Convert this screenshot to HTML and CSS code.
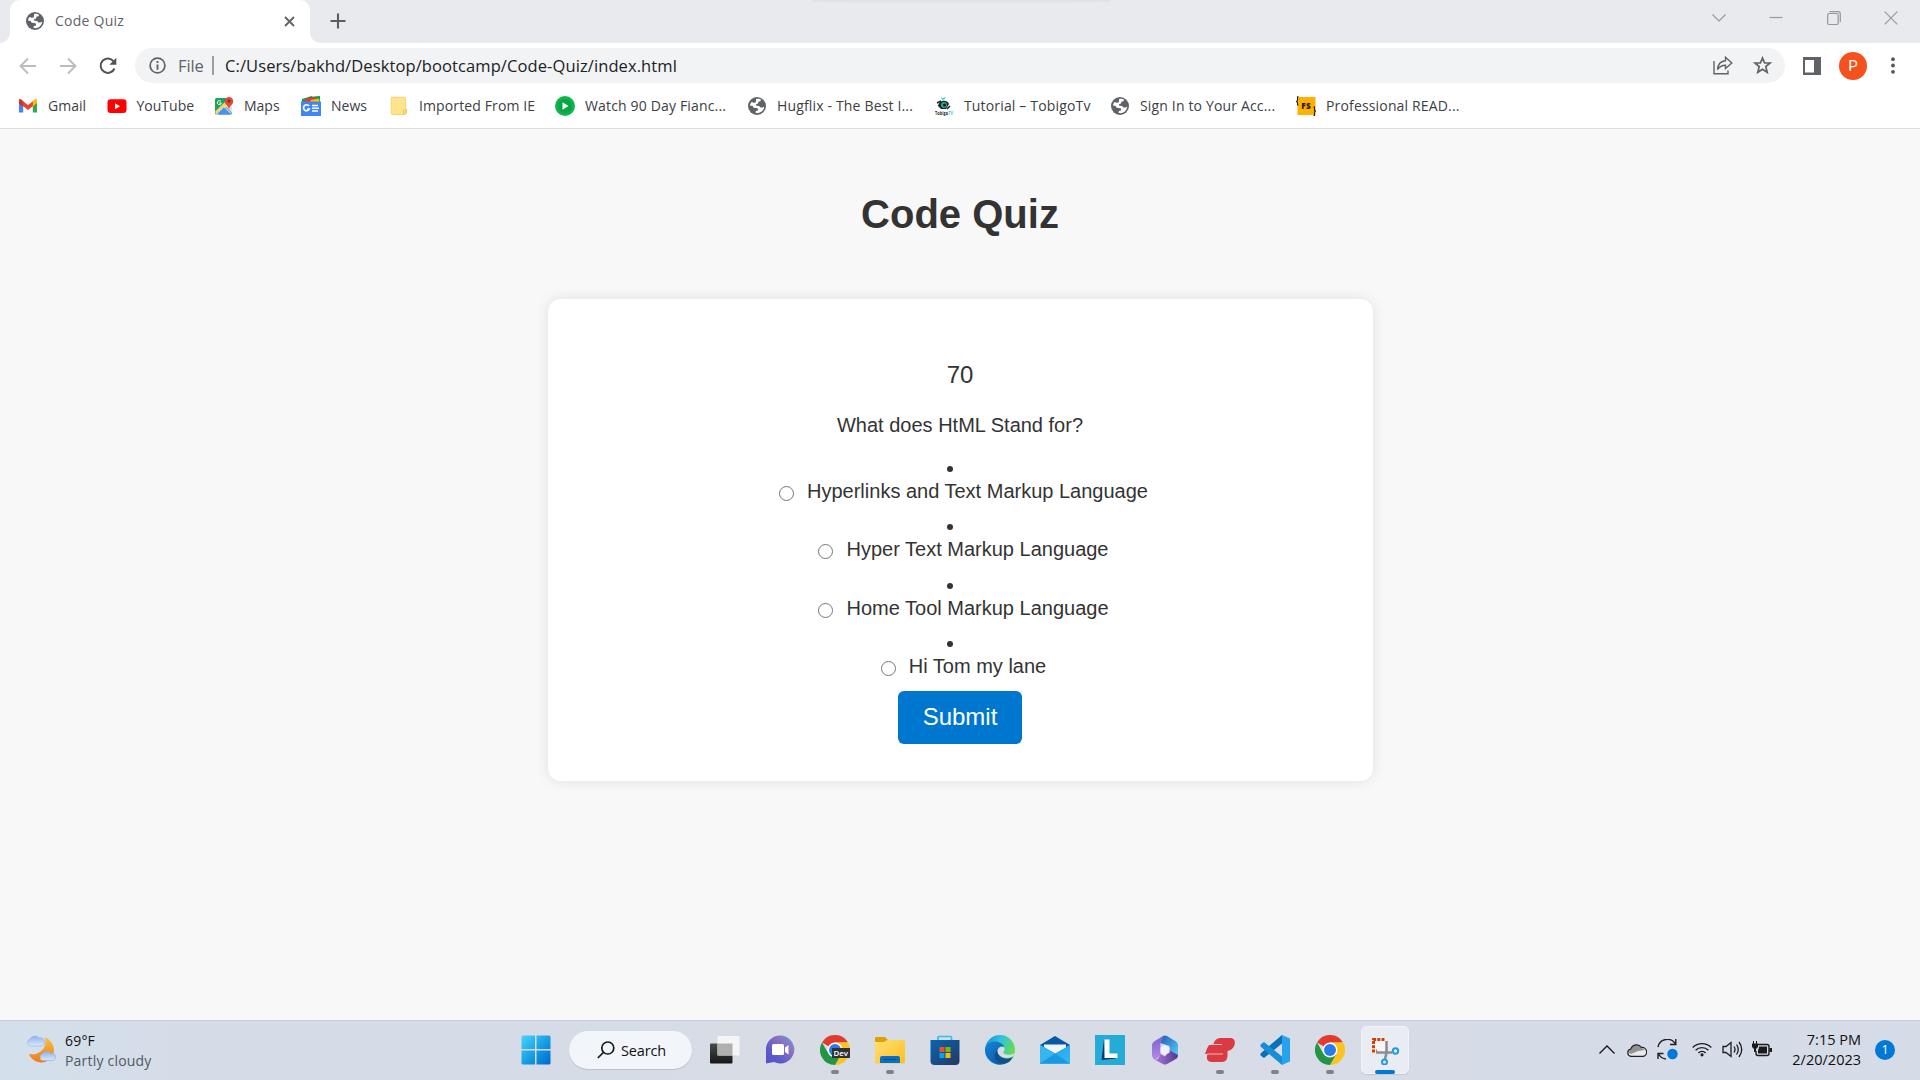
FILE: index.html
```html
<!DOCTYPE html>
<html lang="en">
<head>
<meta charset="utf-8">
<title>Code Quiz</title>
<link rel="stylesheet" href="styles.css">
</head>
<body>
<svg class="defs" width="0" height="0" aria-hidden="true">
  <defs>
    <symbol id="globe" viewBox="0 0 18 18">
      <circle cx="9" cy="9" r="9" fill="#5f6368"/>
      <path d="M8.2 1.9C10.500 1.500 12 2 13 2.800L12.400 4.300 10.400 4.800 10 6.600 8 7.200 8.300 8.700 11.200 8.900 12.400 10.500 14.700 10.600 16.200 9.500C16 13 13.400 16 9.500 16.200L7.500 15.800 7.800 13.900 9.900 13.400 10.200 11.700 8.300 10.900 5.600 10.800 4.700 9 1.900 8.400C2.200 7 2.700 5.900 3.500 4.900L5.800 5.800 7.700 5.400Z" fill="#fff"/>
    </symbol>
    <linearGradient id="win" x2="1" y2="1"><stop stop-color="#4bd3ff"/><stop offset=".55" stop-color="#149be3"/><stop offset="1" stop-color="#0068cc"/></linearGradient>
    <linearGradient id="moon" x2="0" y2="1"><stop stop-color="#f6c244"/><stop offset="1" stop-color="#f07a1c"/></linearGradient>
    <linearGradient id="cloud" x2="0" y2="1"><stop stop-color="#8fb2ee"/><stop offset="1" stop-color="#dbe7fa"/></linearGradient>
    <linearGradient id="chat" x1="1" x2="0" y2="1"><stop stop-color="#64a2ec"/><stop offset=".35" stop-color="#8c70bc"/><stop offset=".7" stop-color="#5b5bcb"/><stop offset="1" stop-color="#5951c6"/></linearGradient>
    <linearGradient id="folder" x2="1" y2="1"><stop stop-color="#ffdf75"/><stop offset="1" stop-color="#fcc11d"/></linearGradient>
    <linearGradient id="store" x2="1" y2="1"><stop stop-color="#0765b3"/><stop offset="1" stop-color="#253961"/></linearGradient>
    <linearGradient id="edge" x2="1" y2=".4"><stop stop-color="#118bd5"/><stop offset=".5" stop-color="#2fc2df"/><stop offset="1" stop-color="#66dd4f"/></linearGradient>
    <linearGradient id="edgeb" x2="1" y2="1"><stop stop-color="#1386d9"/><stop offset="1" stop-color="#0c4a93"/></linearGradient>
    <linearGradient id="mail" x2="1" y2="1"><stop stop-color="#1aa1e6"/><stop offset="1" stop-color="#35b9f2"/></linearGradient>
    <linearGradient id="tvdark" x2="0" y2="1"><stop stop-color="#494a4b"/><stop offset="1" stop-color="#171717"/></linearGradient>
    <linearGradient id="offa" x2="1" y2="1"><stop stop-color="#2459b6"/><stop offset="1" stop-color="#4fd0f7"/></linearGradient>
    <linearGradient id="offb" x2="0" y2="1"><stop stop-color="#7b62cc"/><stop offset="1" stop-color="#b48ae6"/></linearGradient>
    <linearGradient id="offc" x2="1" y2="0"><stop stop-color="#b377da"/><stop offset="1" stop-color="#4b3a90"/></linearGradient>
    <symbol id="chrome" viewBox="0 0 30 30">
      <path d="M15 15 2 7.500A15 15 0 0 1 28 7.500H15Z" fill="#e23b2e"/>
      <path d="M28 7.500A15 15 0 0 1 15 30L21.500 18.750 15 7.500Z" fill="#fdc51c"/>
      <path d="M2 7.500A15 15 0 0 0 15 30L21.500 18.750 8.500 18.750Z" fill="#249544"/>
      <circle cx="15" cy="15" r="7.500" fill="#fff"/>
      <circle cx="15" cy="15" r="6" fill="#2a7be9"/>
    </symbol>
  </defs>
</svg>

<header class="browser">
  <div class="tabstrip">
    <div class="tab">
      <svg class="tab-icon" width="18" height="18"><use href="#globe"/></svg>
      <span class="tab-title">Code Quiz</span>
      <svg class="tab-close" width="11" height="11" viewBox="0 0 11 11"><path d="M1 1 10 10M10 1 1 10" stroke="#5f6368" stroke-width="1.900"/></svg>
    </div>
    <svg class="newtab" width="16" height="16" viewBox="0 0 16 16"><path d="M8 .5V15.500M.5 8H15.500" stroke="#5a5e63" stroke-width="2.100"/></svg>
    <div class="window-controls">
      <svg width="14" height="14" viewBox="0 0 14 14"><path d="M.5 3.500 7 10 13.500 3.500"/></svg>
      <svg width="14" height="14" viewBox="0 0 14 14"><path d="M.5 6.500H13.500"/></svg>
      <svg width="14" height="14" viewBox="0 0 14 14"><rect x=".7" y="2.500" width="10.500" height="11" rx="1.500"/><path d="M2.500.7H11A2.300 2.300 0 0 1 13.300 3V11"/></svg>
      <svg width="14" height="14" viewBox="0 0 14 14"><path d="M.7.700 13.300 13.300M13.300.700.700 13.300"/></svg>
    </div>
  </div>

  <div class="toolbar">
    <div class="nav">
      <svg width="18" height="18" viewBox="0 0 18 18" fill="none" stroke="#babcbe" stroke-width="1.900"><path d="M17 9H2M9 1.500 1.500 9 9 16.500"/></svg>
      <svg width="18" height="18" viewBox="0 0 18 18" fill="none" stroke="#babcbe" stroke-width="1.900"><path d="M1 9H16M9 1.500 16.500 9 9 16.500"/></svg>
      <svg width="18" height="18" viewBox="0 0 18 18" fill="none" stroke="#505458" stroke-width="2"><path d="M15.500 11.500A7.200 7.200 0 1 1 14.600 4.300"/><path d="M17.300.8V7.800H10.300Z" fill="#505458" stroke="none"/></svg>
    </div>
    <div class="omnibox">
      <svg width="17" height="17" viewBox="0 0 17 17"><circle cx="8.500" cy="8.500" r="7.400" fill="none" stroke="#5f6368" stroke-width="1.700"/><path d="M8.500 4V5.900M8.500 7.400V12.700" stroke="#5f6368" stroke-width="1.900"/></svg>
      <span class="scheme">File</span>
      <i class="divider"></i>
      <span class="url">C:/Users/bakhd/Desktop/bootcamp/Code-Quiz/index.html</span>
      <svg class="share" width="20" height="19" viewBox="0 0 20 19" fill="none" stroke="#5f6368" stroke-width="1.400"><path d="M1 5V17.700H15V14.500"/><path d="M4.500 13.500C5 8 8 5 12.500 4.700V1.300L18.800 7 12.500 12.500V9.200C8.500 9.200 6.500 10.500 4.500 13.500Z"/></svg>
      <svg width="19" height="19" viewBox="0 0 19 19"><path d="M9.500 2 11.600 7H17L12.800 10.600 14.200 16.300 9.500 13.200 4.800 16.300 6.200 10.600 2 7H7.400Z" fill="none" stroke="#5f6368" stroke-width="1.700"/></svg>
    </div>
    <svg class="panel" width="18" height="18" viewBox="0 0 18 18"><path d="M0 0H18V18H0Z" fill="#5f6368"/><path d="M2 3H11V15.500H2Z" fill="#fff"/></svg>
    <span class="avatar">P</span>
    <svg class="dots" width="4" height="17" viewBox="0 0 4 17" fill="#54585c"><circle cx="2" cy="2.200" r="1.900"/><circle cx="2" cy="8.500" r="1.900"/><circle cx="2" cy="14.800" r="1.900"/></svg>
  </div>

  <nav class="bookmarks">
    <div class="bm"><svg viewBox="0 0 20 20"><path d="M1 5V16.500H5.200V8Z" fill="#4285f4"/><path d="M19 5V16.500H14.800V8Z" fill="#34a853"/><path d="M1 4.500 5.200 7.500V10.500L1 7.500Z" fill="#c5221f"/><path d="M2.500 3.300 10 9 17.500 3.300 14.800 10.300 10 14 5.200 10.300Z" fill="#ea4335"/><path d="M1 7V4.500C1 3 2 2.700 3.200 3.600L5.200 5.200V10.400Z" fill="#d93025"/><path d="M19 7V4.500C19 3 18 2.700 16.800 3.600L14.800 5.200V10.400Z" fill="#fbbc04"/></svg><span>Gmail</span></div>
    <div class="bm"><svg viewBox="0 0 20 20"><rect x=".5" y="3.300" width="19" height="13.800" rx="3" fill="#f00"/><path d="M8 7.200 13 10.200 8 13.200Z" fill="#fff"/></svg><span>YouTube</span></div>
    <div class="bm"><svg viewBox="0 0 20 20"><rect x="1" y="2" width="17" height="16.500" rx="1.500" fill="#1ca261"/><path d="M1 15.500 13 4 16 7 4 18.500H2Z" fill="#ffd04b"/><path d="M11 10 18 17V8Z" fill="#dce1e3"/><path d="M9.500 10.500 3 17 5 18.500H16L17 17Z" fill="#4d8ff6"/><path d="M3 17.500 10 10.500 17 17.500" stroke="#fff" fill="none"/><path d="M15 1A4.300 4.300 0 0 0 10.700 5.300C10.700 8.500 14 9 15 13.500 16 9 19.300 8.500 19.300 5.300A4.300 4.300 0 0 0 15 1Z" fill="#df493b"/><circle cx="15" cy="5" r="1.500" fill="#812923"/><path d="M6.800 5.300A2 2 0 1 0 7.300 7H5.300" fill="none" stroke="#fff"/></svg><span>Maps</span></div>
    <div class="bm"><svg viewBox="0 0 20 20"><path d="M1 3 11 0V7H1Z" fill="#149b50"/><path d="M7 1 19 0V7H6Z" fill="#14994c"/><path d="M4 3 14 1 15 7H4Z" fill="#e33c30"/><path d="M10 4 18 2.500 19 8H9Z" fill="#fbbc04"/><path d="M0 5.500H20V20H0Z" fill="#4285f4"/><path d="M8 10A3 3 0 1 0 8.300 13H6" fill="none" stroke="#fff" stroke-width="1.700"/><path d="M11 9.500H17M11 12.300H18M11 15H17" stroke="#fff" stroke-width="1.600"/></svg><span>News</span></div>
    <div class="bm"><svg viewBox="0 0 20 20"><path d="M2.500 1.300H15Q16.500 1.300 16.500 2.500V13H17.500Q18 18.500 15 18.500H3.500Q2.200 18.500 2.200 17V2.500Q2.200 1.300 3.500 1.300Z" fill="#ffe38d" stroke="#f7d46d"/><path d="M14.500 17.500V14H17.500V17Q16 19 14.500 17.500Z" fill="#ffdc76" stroke="#edc75e"/></svg><span>Imported From IE</span></div>
    <div class="bm"><svg viewBox="0 0 20 20"><circle cx="10" cy="10" r="10" fill="#0fb64e"/><circle cx="10" cy="10" r="7" fill="#08a545"/><path d="M7.500 6.300 13.500 10 7.500 13.700Z" fill="#fff"/></svg><span>Watch 90 Day Fianc...</span></div>
    <div class="bm"><svg class="small"><use href="#globe"/></svg><span>Hugflix - The Best I...</span></div>
    <div class="bm"><svg class="tobigo" viewBox="0 0 20 20"><path d="M7 1 9 2 12 1 10 4 8 3.500Z" fill="#40d9bc"/><path d="M4 10C5 4 13 3 15 8L12 13H7Z" fill="#222"/><path d="M3 7 7 5M13 13 16 10" stroke="#222" stroke-width="1.500"/><circle cx="10" cy="9" r="3" fill="#23ad9c"/><circle cx="10.500" cy="9" r="1.500" fill="#111"/><text x="1" y="18.700" font-size="5.500" font-weight="bold" textLength="18" lengthAdjust="spacingAndGlyphs" fill="#222">Tobigo<tspan fill="#36cbb4">TV</tspan></text></svg><span>Tutorial – TobigoTv</span></div>
    <div class="bm"><svg class="small"><use href="#globe"/></svg><span>Sign In to Your Acc...</span></div>
    <div class="bm"><svg viewBox="0 0 20 20"><path d="M1.500 1H19.500V19H1.500Z" fill="#ffb000"/><path d="M2.500.7H1.500V4.500L.5 5.500 1.500 6.500V9H2.500M17.500 11H18.500V14L19.500 15 18.500 16V19.500H17.500" fill="none" stroke="#222" stroke-width="1.100"/><text x="5.300" y="13.300" font-size="8.500" font-weight="800" textLength="9.500" lengthAdjust="spacingAndGlyphs" fill="#222">FS</text></svg><span>Professional READ...</span></div>
  </nav>
</header>

<main class="page">
  <h1>Code Quiz</h1>
  <section class="card">
    <p class="timer">70</p>
    <p class="question">What does HtML Stand for?</p>
    <ul class="answers">
      <li><i class="bullet"></i><label><span class="radio"></span>Hyperlinks and Text Markup Language</label></li>
      <li><i class="bullet"></i><label><span class="radio"></span>Hyper Text Markup Language</label></li>
      <li><i class="bullet"></i><label><span class="radio"></span>Home Tool Markup Language</label></li>
      <li><i class="bullet"></i><label><span class="radio"></span>Hi Tom my lane</label></li>
    </ul>
    <button class="submit">Submit</button>
  </section>
</main>

<footer class="taskbar">
  <div class="weather">
    <svg width="30" height="30" viewBox="0 0 30 30"><path d="M19 3C29 8 31 20 23 26 16 31 6 28 3 20 12 22 22 15 19 3Z" fill="url(#moon)"/><path d="M4 12A3.800 3.800 0 0 1 4 5 5.500 5.500 0 0 1 13 4 4 4 0 0 1 16 12Z" fill="url(#cloud)" stroke="#8caee6" stroke-width=".6"/><path d="M16 26.500A3.600 3.600 0 0 1 16 20 5.500 5.500 0 0 1 25 19.500 3.600 3.600 0 0 1 27 26.500Z" fill="url(#cloud)" stroke="#8caee6" stroke-width=".6"/></svg>
    <div class="weather-text"><span>69°F</span><span class="muted">Partly cloudy</span></div>
  </div>

  <div class="apps">
    <div class="start"><svg width="30" height="30" viewBox="0 0 30 30" fill="url(#win)"><path d="M.5 15.500V2Q.5 .5 2 .5H14V14H.5ZM15.500.5H28Q29.500.5 29.500 2V14H15.500ZM.5 15.500H14V29.500H2Q.5 29.500.5 28ZM15.500 15.500H29.500V28Q29.500 29.500 28 29.500H15.500Z"/></svg></div>
    <div class="search"><svg width="18" height="18" viewBox="0 0 18 18" fill="none" stroke="#1b1b1b" stroke-width="1.700"><circle cx="10.800" cy="7" r="6"/><path d="M6.500 11.300.8 17"/></svg><span>Search</span></div>
    <div class="app"><svg viewBox="0 0 30 30"><rect y="8.500" width="22.500" height="20" rx="1" fill="url(#tvdark)"/><rect x="7.500" y="1" width="22" height="19.500" rx="1" fill="#f5f5f5"/><path d="M7.500 8.500H22.500V20.500H7.500Z" fill="#b0b0b0"/></svg></div>
    <div class="app"><svg viewBox="0 0 30 30"><path d="M15 .5A14 14 0 1 1 9 27L1 28.500V15A14 14 0 0 1 15 .5Z" fill="url(#chat)"/><rect x="7" y="9" width="12" height="11" rx="1.500" fill="#fff"/><path d="M20 12.500 23.500 10V19.500L20 17Z" fill="#fff"/></svg></div>
    <div class="app open"><svg viewBox="0 0 30 30"><use href="#chrome"/><rect x="12" y="13" width="18" height="10" fill="#303336"/><text x="13.500" y="20.800" font-size="7.500" font-weight="600" textLength="14.500" lengthAdjust="spacingAndGlyphs" fill="#fff">Dev</text></svg></div>
    <div class="app open"><svg viewBox="0 0 30 30"><path d="M0 3Q0 2 1 2H10L13 5V9H0Z" fill="#dfa000"/><path d="M0 7H9L12 5H29Q30 5 30 6V27Q30 28.500 28.500 28.500H1.500Q0 28.500 0 27Z" fill="url(#folder)"/><path d="M5 28V23Q5 21 7 21H23Q25 21 25 23V28Z" fill="#0870c8"/><path d="M8.500 24.500H21.500" stroke="#064b8b" stroke-width="1.200"/></svg></div>
    <div class="app"><svg viewBox="0 0 30 30"><path d="M8 6V2.500Q8 1.500 9 1.500H20.500Q21.500 1.500 21.500 2.500V6" fill="none" stroke="#34bdf1" stroke-width="1.700"/><path d="M.5 5H29.500V26Q29.500 30 25.500 30H4.500Q.5 30 .5 26Z" fill="url(#store)"/><path d="M9.500 12H14.500V17H9.500Z" fill="#f25022"/><path d="M15.500 12H20.500V17H15.500Z" fill="#7fba00"/><path d="M9.500 18H14.500V23H9.500Z" fill="#00a4ef"/><path d="M15.500 18H20.500V23H15.500Z" fill="#ffb900"/></svg></div>
    <div class="app"><svg viewBox="0 0 30 30"><circle cx="15" cy="15" r="15" fill="url(#edge)"/><path d="M0 14C2 5 14 4 19 11L12 17C12 26 22 28 28 22A15 15 0 0 1 0 14Z" fill="url(#edgeb)"/><path d="M12 15C5 24 15 31 24 27L28 22C22 25 14 24 12 15Z" fill="#114d91"/><path d="M17.500 11.500A5 5 0 0 0 12.500 16C12.500 19 14.500 21 17 22 22 24 27 23 30 19L30 18C27 20.500 20 20.500 18 17.500 20.500 15 20 12.500 17.500 11.500Z" fill="#d6dce6"/></svg></div>
    <div class="app"><svg viewBox="0 0 30 30"><path d="M0 10 15 1 30 10 15 20Z" fill="#0658a8"/><path d="M4 9.500H26V16L15 22 4 16Z" fill="#f2f3f5"/><path d="M0 10 15 18.500 30 28.500H0Z" fill="#1789d9"/><path d="M30 10V28.500H0L0 10 15 18.500Z" fill="url(#mail)"/><path d="M0 10V28.500L15 18.500Z" fill="#36b6ee"/><path d="M15 18.500 30 28.500H0Z" fill="#189ae2"/></svg></div>
    <div class="app"><svg viewBox="0 0 30 30"><path d="M0 0H30V30H0Z" fill="#25abd8"/><path d="M9 4 6.500 25 21 23.500 10 21Z" fill="#08396b"/><path d="M9.500 4.500H14.500V18.500H22.500V23H9.500Z" fill="#fff"/></svg></div>
    <div class="app"><svg viewBox="0 0 30 30"><path d="M13 1Q15 0 17 1L26 6.500Q28 8 28 10V20L19.500 15V11L10 8Z" fill="url(#offa)"/><path d="M13 1 4 6.500Q2 8 2 10V20Q2 23 5 25L10.500 20V8Z" fill="url(#offb)"/><path d="M10.500 19 15 21.500 19.500 15 28 20Q28 23 25 24.500L17 29Q15 30 13 29L5 25Q8 25 10.500 19Z" fill="url(#offc)"/><path d="M15 10 19.500 12.500V17.500L15 20 10.500 17.500V12.500Z" fill="#eef0fa"/></svg></div>
    <div class="app open"><svg viewBox="0 0 30 30"><path d="M8 10Q10 3 15 3H26Q31 4 29.500 10 28 15 22.500 16V19.500Q23 27 17 27H7Q1 27 2 21L2.500 19H0L2 13.500 4 10Z" fill="#da3b43"/><path d="M6 9.500H17M2 19H18" stroke="#ebb9c0"/></svg></div>
    <div class="app open"><svg viewBox="0 0 30 30"><path d="M22 0 30 3.500V26.500L22 30Z" fill="#27a2ee"/><path d="M22 0V8.500L4 23 .5 20.500V18.500Z" fill="#0871b7"/><path d="M22 30V21.500L4 7 .5 9.500V11.500Z" fill="#168ed6"/></svg></div>
    <div class="app open"><svg viewBox="0 0 30 30"><use href="#chrome"/></svg></div>
    <div class="app open active"><svg viewBox="0 0 30 30"><rect x="2" y="2.500" width="15" height="15" rx="2" fill="#f6f6f6"/><path d="M14.500 4.500H3.500V16H7" fill="none" stroke="#d83b01" stroke-width="3" stroke-dasharray="3 1.200"/><path d="M16.500 6V18L15 24M6 17.500H22" stroke="#8b8d91" stroke-width="2.600" fill="none"/><circle cx="25.500" cy="16" r="2.700" fill="none" stroke="#229bdc" stroke-width="2"/><circle cx="14.500" cy="27" r="2.500" fill="none" stroke="#229bdc" stroke-width="2"/></svg></div>
  </div>

  <div class="tray">
    <svg width="16" height="9" viewBox="0 0 16 9"><path d="M.5 8.500 8 1 15.500 8.500" fill="none" stroke="#151515" stroke-width="1.300"/></svg>
    <svg class="cloud" width="20" height="14" viewBox="0 0 20 14"><path d="M4 13.300A3.700 3.700 0 0 1 3.800 6 6 6 0 0 1 14.500 4.500 4.500 4.500 0 0 1 16.300 13.300Z" fill="#eaeaea"/><path d="M3.800 6A6 6 0 0 1 14.500 4.500L18 7 11 8 4 11 1 9Z" fill="#929292"/><path d="M4 13.300A3.700 3.700 0 0 1 3.800 6 6 6 0 0 1 14.500 4.500 4.500 4.500 0 0 1 16.300 13.300Z" fill="none" stroke="#222" stroke-width="1.200"/></svg>
    <svg class="sync" width="21" height="21" viewBox="0 0 21 21" fill="none" stroke="#202020" stroke-width="1.400"><path d="M1 8A9.500 9.500 0 0 1 18.500 5M18.800 0V5.500H13M1 20V14.500H6.500M1.500 15A9.500 9.500 0 0 0 9 20"/><circle cx="15.500" cy="15" r="5.200" fill="#0078d7" stroke="none"/></svg>
    <svg class="wifi" width="20" height="15" viewBox="0 0 20 15" fill="none" stroke="#1b1b1b" stroke-width="1.400"><path d="M.7 5.500A13.200 13.200 0 0 1 19.300 5.500M3.600 8.300A9.100 9.100 0 0 1 16.400 8.300M6.400 11A5.200 5.200 0 0 1 13.600 11"/><circle cx="10" cy="12.800" r="1.600" fill="#1b1b1b" stroke="none"/></svg>
    <svg class="sound" width="21" height="17" viewBox="0 0 21 17" fill="none" stroke="#1b1b1b" stroke-width="1.300"><path d="M1 5.500H4L9 1.500V15.500L4 11.500H1ZM12 5.500Q14 8.500 12 11.500M14.500 3.500Q18 8.500 14.500 13.500M17 1Q22.500 8.500 17 16"/></svg>
    <svg class="battery" width="20" height="17" viewBox="0 0 20 17"><path d="M6 3.500H15Q17 3.500 17 5.500V12.500Q17 14.500 15 14.500H6Q4 14.500 4 12.500V10" fill="none" stroke="#1b1b1b" stroke-width="1.400"/><path d="M7 5.500H15V12.500H6V9Q7 8 7 5.500ZM17.500 7H20V11H17.500ZM0 2.500H1V0H2V2.500H4V0H5V2.500H6V6L4 8V11H2V8L0 6Z" fill="#1b1b1b"/></svg>
    <div class="clock"><span>7:15 PM</span><span>2/20/2023</span></div>
    <span class="badge">1</span>
  </div>
</footer>
</body>
</html>
```

FILE: styles.css
```css
* { box-sizing: border-box; }
body { margin: 0; width: 1920px; height: 1080px; overflow: hidden; display: flex; flex-direction: column; font-family: "Open Sans", "Noto Sans", sans-serif; background: #f8f8f8; }
svg { display: block; flex: none; }
.defs { position: absolute; }
span { white-space: nowrap; }

.browser { height: 129px; background: #fff; border-bottom: 1px solid #dadce0; }
.tabstrip { position: relative; height: 43px; background: #e8eaed; display: flex; align-items: flex-start; padding-left: 10px; }
.tabstrip::after { content: ""; position: absolute; left: 812px; top: 0; width: 298px; height: 4px; background: linear-gradient(rgba(110,115,130,.08), transparent); border-radius: 0 0 50% 50%; }
.tab { position: relative; width: 300px; height: 43px; border-radius: 10px 10px 0 0; background: #fff; display: flex; align-items: center; padding: 0 15px 1px 16px; }
.tab::before, .tab::after { content: ""; position: absolute; bottom: 0; width: 10px; height: 10px; }
.tab::before { left: -10px; background: radial-gradient(circle at 0 0, transparent 9.500px, #fff 10px); }
.tab::after { right: -10px; background: radial-gradient(circle at 100% 0, transparent 9.500px, #fff 10px); }
.tab-title { margin: -2px 0 0 11px; flex: 1; font-size: 14px; letter-spacing: .25px; color: #5f6368; }
.newtab { margin: 13px 0 0 20px; }
.window-controls { margin: 11px 22px 0 auto; display: flex; gap: 43.300px; }
.window-controls path, .window-controls rect { fill: none; stroke: #96989c; stroke-width: 1.200; }

.toolbar { height: 45px; display: flex; align-items: center; padding: 0 25.500px 0 18.500px; }
.nav { display: flex; gap: 22px; width: 116.500px; }
.omnibox { width: 1650px; height: 35px; border-radius: 17.500px; background: #f1f3f4; display: flex; align-items: center; padding: 0 13px 0 14px; }
.scheme { margin-left: 12px; width: 34px; font-size: 16.500px; letter-spacing: -.1px; color: #5f6368; }
.divider { width: 2px; height: 19px; background: #9b9ea2; margin-right: 11px; }
.url { flex: 1; font-size: 16.500px; letter-spacing: .1px; color: #202124; }
.share { margin-right: 20px; }
.panel { margin-left: 18.500px; }
.avatar { margin-left: 18px; width: 28px; height: 28px; border-radius: 50%; background: #f4511e; color: #fff; font: 15px/28px Roboto, sans-serif; text-align: center; }
.dots { margin-left: 23.500px; }

.bookmarks { height: 35px; padding-left: 18px; display: grid; grid-template-columns: 88.500px 107.500px 87px 88px 166px 192px 187px 176px 186px 180px; }
.bm { display: flex; align-items: center; gap: 10px; font-size: 14px; letter-spacing: .12px; color: #3c4043; }
.bm:nth-child(-n+4) { letter-spacing: 0; }
.bm:nth-child(n+6) { letter-spacing: .16px; }
.bm svg { width: 20px; height: 20px; }
.bm span { margin-top: -1px; }
.bm .small { width: 18px; height: 18px; margin: 0 1px; }

.page { flex: 1; display: flex; flex-direction: column; align-items: center; padding-top: 62px; background: #f8f8f8; color: #333; font-family: "Liberation Sans", Arial, sans-serif; }
h1 { margin: 0; font-size: 40px; line-height: 46px; }
.card { margin-top: 62px; width: 825px; height: 482px; padding-top: 62px; border-radius: 12.500px; background: #fff; box-shadow: 0 0 12.500px rgba(0,0,0,.1); display: flex; flex-direction: column; align-items: center; }
p { margin: 0; }
.timer { font-size: 24px; line-height: 28px; }
.question { font-size: 20px; line-height: 24px; margin-top: 24px; }
.answers { list-style: none; margin: 0; padding: 25px 0 0; width: 100%; }
.answers li { height: 58.400px; display: flex; flex-direction: column; align-items: center; font-size: 20px; line-height: 23px; }
.bullet { width: 6px; height: 6px; border-radius: 50%; background: #333; margin: 4px 20px 8px 0; }
label { display: flex; padding-left: 7px; }
.radio { width: 15px; height: 15px; border: 1.300px solid #767676; border-radius: 50%; margin: 6px 13px 0 0; }
.submit { margin-top: -5px; width: 124px; height: 53px; padding: 0 0 1px; border: 0; border-radius: 6px; background: #0077cf; color: #fff; font: 24px/28px "Liberation Sans", Arial, sans-serif; }

.taskbar { height: 60px; border-top: 1px solid #c5ccd9; background: linear-gradient(90deg, #d3e0eb 0, #d5dce8 10%, #d5dce7 25%, #d8dce4 45%, #d7dce6 65%, #d5dce8 100%); display: grid; grid-template-columns: 508px 904px 1fr; color: #111; }
.weather { display: flex; align-items: flex-start; padding: 13px 0 0 26px; }
.weather-text { margin: -3px 0 0 9px; display: flex; flex-direction: column; font-size: 14px; line-height: 20px; letter-spacing: .2px; }
.muted { color: #525961; }
.apps { display: flex; align-items: center; padding-bottom: 1px; }
.start { width: 61px; padding-left: 13px; }
.search { width: 123px; height: 38px; margin-right: 5px; border-radius: 19px; background: #f2f5f9; box-shadow: 0 1px 1px rgba(0,0,0,.13); display: flex; align-items: center; gap: 6px; padding-left: 28px; font-size: 14.500px; letter-spacing: -.15px; }
.app { position: relative; width: 55px; height: 58px; display: grid; place-items: center; }
.app svg { width: 30px; height: 30px; }
.app.open::after { content: ""; position: absolute; left: 23.500px; bottom: 5px; width: 8px; height: 4px; border-radius: 2px; background: #7f8286; }
.app.active::before { content: ""; position: absolute; inset: 5px 3.500px; border-radius: 5px; background: #e9edf3; border: 1px solid #f0f3f7; box-shadow: 0 1px 1px rgba(0,0,0,.1); }
.app.active svg { position: relative; }
.app.active::after { left: 17.500px; width: 20px; background: #0078d7; }
.tray { display: flex; align-items: center; padding: 0 0 2px 187px; }
.cloud { margin-left: 12px; }
.sync { margin-left: 10px; }
.wifi { margin-left: 14px; }
.sound { margin-left: 10px; }
.battery { margin-left: 9px; }
.clock { width: 89px; display: flex; flex-direction: column; align-items: flex-end; font-size: 14.500px; line-height: 20px; letter-spacing: 0; }
.badge { margin-left: 14px; width: 20px; height: 20px; border-radius: 50%; background: #0078d7; color: #fff; font-size: 12.500px; line-height: 20px; text-align: center; }
```
